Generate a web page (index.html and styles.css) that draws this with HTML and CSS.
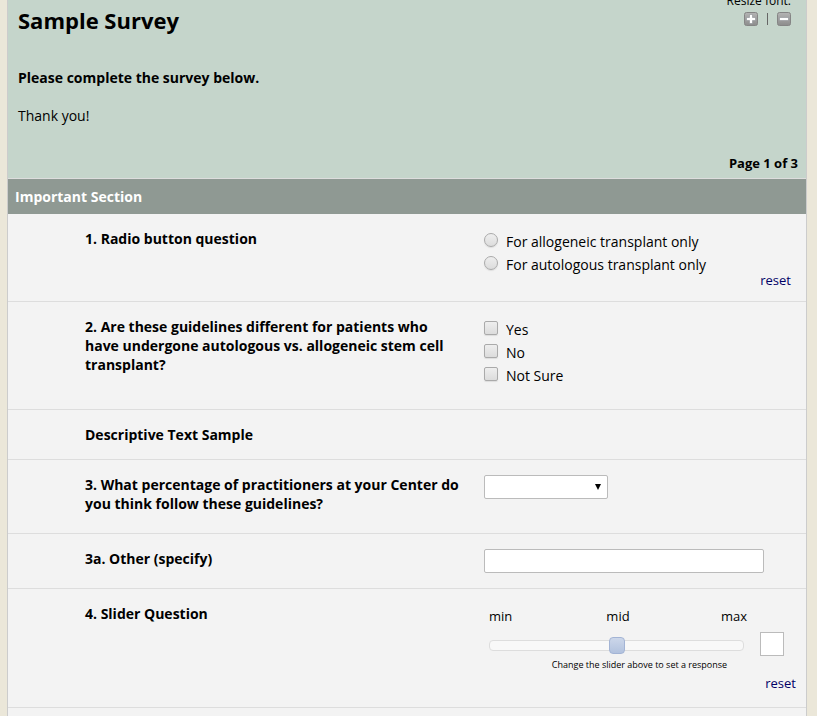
FILE: index.html
```html
<!DOCTYPE html>
<html lang="en">
<head>
<meta charset="utf-8">
<title>Sample Survey</title>
<link rel="stylesheet" href="styles.css">
</head>
<body>
<form class="page">
  <header class="intro">
    <div class="intro-text">
      <h1>Sample Survey</h1>
      <p class="lead">Please complete the survey below.</p>
      <p>Thank you!</p>
    </div>
    <div class="font-tools">
      <span>Resize font:</span>
      <div class="font-buttons">
        <button type="button" class="icon-button" aria-label="Increase font size">
          <svg viewBox="0 0 14 14" width="14" height="14">
            <defs><linearGradient id="key" x1="0" y1="0" x2="0" y2="1"><stop offset="0" stop-color="#b4b4b4"/><stop offset="1" stop-color="#8c8c8c"/></linearGradient></defs>
            <rect x=".5" y=".5" width="13" height="13" rx="2" fill="url(#key)" stroke="#858585"/>
            <path d="M5.5 2.5h3v3h3v3h-3v3h-3v-3h-3v-3h3z" fill="#fff" stroke="#8c8f94" stroke-width=".6"/>
          </svg>
        </button>
        <span class="divider"></span>
        <button type="button" class="icon-button" aria-label="Decrease font size">
          <svg viewBox="0 0 14 14" width="14" height="14">
            <rect x=".5" y=".5" width="13" height="13" rx="2" fill="url(#key)" stroke="#858585"/>
            <path d="M2.5 5.5h9v3h-9z" fill="#fff" stroke="#8c8f94" stroke-width=".6"/>
          </svg>
        </button>
      </div>
    </div>
    <p class="page-number">Page 1 of 3</p>
  </header>

  <h2 class="section">Important Section</h2>

  <div class="row" role="radiogroup" aria-labelledby="q1">
    <div class="question" id="q1">1. Radio button question</div>
    <div class="answer">
      <label class="choice"><input type="radio" name="transplant">For allogeneic transplant only</label>
      <label class="choice"><input type="radio" name="transplant">For autologous transplant only</label>
      <a class="reset" href="#">reset</a>
    </div>
  </div>

  <div class="row" role="group" aria-labelledby="q2">
    <div class="question" id="q2">2. Are these guidelines different for patients who have undergone autologous vs. allogeneic stem cell transplant?</div>
    <div class="answer choices">
      <label class="choice"><input type="checkbox">Yes</label>
      <label class="choice"><input type="checkbox">No</label>
      <label class="choice"><input type="checkbox">Not Sure</label>
    </div>
  </div>

  <div class="row">
    <div class="question">Descriptive Text Sample</div>
  </div>

  <div class="row">
    <label class="question" for="percentage">3. What percentage of practitioners at your Center do you think follow these guidelines?</label>
    <div class="answer tall">
      <div class="select-box">
        <select id="percentage"><option></option></select>
        <svg class="arrow" viewBox="0 0 6 6" width="6" height="6"><path d="M0 0h6L3 6z"/></svg>
      </div>
    </div>
  </div>

  <div class="row">
    <label class="question" for="other">3a. Other (specify)</label>
    <div class="answer"><input class="text" id="other" type="text"></div>
  </div>

  <div class="row">
    <label class="question" for="slider">4. Slider Question</label>
    <div class="answer slider-answer">
      <div class="slider-line">
        <div class="slider">
          <div class="scale"><span>min</span><span>mid</span><span>max</span></div>
          <input id="slider" type="range" min="0" max="100" value="50">
          <div class="hint">Change the slider above to set a response</div>
        </div>
        <input class="value" type="text" aria-label="Slider value">
      </div>
      <a class="reset slider-reset" href="#">reset</a>
    </div>
  </div>
</form>
</body>
</html>
```
FILE: styles.css
```css
* { box-sizing: border-box; }

body {
  display: flex;
  min-height: 100vh;
  margin: 0;
  padding: 0 10px 0 7px;
  background: #ebe7d9;
  color: #000;
  font: 14px/19px "Open Sans", sans-serif;
}

h1, h2, p { margin: 0; }

.page {
  flex: 1;
  overflow: hidden;
  border: solid #ccc;
  border-width: 0 1px;
  background: #f3f3f3;
}

.intro {
  display: grid;
  grid-template-columns: 1fr auto;
  padding: 0 8px 5px 10px;
  border-bottom: 1px solid #ddd;
  background: #c5d5cb;
}

.intro-text { padding-top: 5px; }
h1 { font-size: 22px; line-height: 30px; font-weight: 700; }
.intro p { margin-top: 19px; }
.intro .lead { margin-top: 33px; font-weight: 700; }

.font-tools {
  display: flex;
  flex-direction: column;
  align-items: flex-end;
  margin-top: -8px;
  padding-right: 7px;
  font-size: 12px;
  line-height: 18px;
}

.font-buttons {
  display: flex;
  align-items: center;
  gap: 9px;
  margin-top: 2px;
}

.icon-button {
  padding: 0;
  border: 0;
  background: none;
}
.icon-button svg { display: block; }

.divider {
  width: 1px;
  height: 12px;
  background: #666;
}

.intro .page-number {
  grid-column: 1 / -1;
  margin-top: 29px;
  text-align: right;
  font-size: 13px;
  font-weight: 700;
}

.section {
  padding: 8px 7px;
  background: #8f9993;
  color: #fff;
  font-size: 14px;
  line-height: 19px;
  font-weight: 700;
}

.row {
  display: grid;
  grid-template-columns: minmax(0, 1fr) 322px;
  column-gap: 20px;
  padding: 15px 0 15px 77px;
  border-bottom: 1px solid #ddd;
}

.question { font-weight: 700; }

.choice {
  display: flex;
  gap: 8px;
  padding: 3px 0 1px;
}

input[type="radio"],
input[type="checkbox"] {
  appearance: none;
  width: 14px;
  height: 14px;
  margin: 1px 0 0;
  border: 1px solid #aaa;
  border-radius: 2px;
  background: linear-gradient(#eee, #dcdcdc);
  box-shadow: 0 1px 1px #ddd;
}
input[type="radio"] { border-radius: 50%; }

.choices { padding-bottom: 8px; }

.reset {
  display: block;
  padding-right: 15px;
  color: #000066;
  font-size: 13px;
  line-height: 11px;
  text-align: right;
  text-decoration: none;
}

.tall { padding-bottom: 19px; }

.select-box {
  position: relative;
  width: 124px;
}

select, .text, .value {
  display: block;
  width: 100%;
  height: 24px;
  padding: 2px 4px;
  border: 1px solid #bbb;
  border-radius: 2px;
  background: #fff;
  font: inherit;
}
select { appearance: none; }

.arrow {
  position: absolute;
  top: 9px;
  right: 7px;
  pointer-events: none;
}

.text { width: 280px; }

.slider-line {
  display: flex;
  align-items: flex-start;
  gap: 16px;
  padding-left: 5px;
}

.slider { width: 255px; }

.scale {
  display: grid;
  grid-template-columns: 1fr 1fr 1fr;
  margin: 3px -3px 0 0;
  font-size: 13px;
}
.scale :nth-child(2) { text-align: center; }
.scale :nth-child(3) { text-align: right; }

input[type="range"] {
  appearance: none;
  display: block;
  width: 100%;
  height: 17px;
  margin: 11px 0 4px;
  background: none;
}
input[type="range"]::-webkit-slider-runnable-track {
  height: 11px;
  border: 1px solid #ddd;
  border-radius: 4px;
  background: #f8f8f8;
}
input[type="range"]::-webkit-slider-thumb {
  appearance: none;
  width: 16px;
  height: 17px;
  margin-top: -4px;
  border: 1px solid #a3b4d5;
  border-radius: 4px;
  background: linear-gradient(#ccd7ea, #b2c2de);
}

.hint {
  padding-left: 46px;
  text-align: center;
  font-size: 9px;
  line-height: 13px;
  white-space: nowrap;
}

.value {
  width: 24px;
  margin-top: 28px;
  border-radius: 0;
}

.slider-reset {
  margin-top: 7px;
  padding: 0 10px 3px 0;
}
```
